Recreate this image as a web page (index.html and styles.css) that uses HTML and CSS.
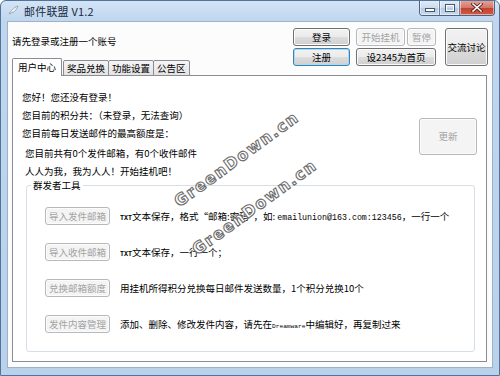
FILE: index.html
```html
<!DOCTYPE html>
<html lang="zh-CN">
<head>
    <meta charset="UTF-8">
    <meta name="viewport" content="width=device-width, initial-scale=1.0">
    <title>邮件联盟 V1.2</title>
    <link rel="stylesheet" href="styles.css">
</head>
<body>
    <div class="window">
        <div class="titlebar">
            <svg class="app-icon" width="11" height="10" viewBox="0 0 11 10">
                <path d="M1 9 C3 6 5 3 10 1 C9 4 7 7 3 8 Z" fill="#f4f6f8" stroke="#8a96a3" stroke-width="0.8"/>
            </svg>
            <span class="title">邮件联盟 V1.2</span>
            <div class="caption">
                <span class="cap cap-min"><i></i></span>
                <span class="cap cap-max"><i></i></span>
                <span class="cap cap-close">
                    <svg width="12" height="9" viewBox="0 0 12 9">
                        <path d="M2 1 L10 8 M10 1 L2 8" stroke="#5a2320" stroke-width="3.2" stroke-linecap="square"/>
                        <path d="M2 1 L10 8 M10 1 L2 8" stroke="#fff" stroke-width="1.6" stroke-linecap="square"/>
                    </svg>
                </span>
            </div>
        </div>
        <div class="client">
            <div class="header">
                <div class="header-left">
                    <div class="prompt">请先登录或注册一个账号</div>
                    <div class="tabs">
                        <div class="tab active">用户中心</div>
                        <div class="tab">奖品兑换</div>
                        <div class="tab">功能设置</div>
                        <div class="tab">公告区</div>
                    </div>
                </div>
                <div class="actions">
                    <div class="col col-login">
                        <button class="btn">登录</button>
                        <button class="btn focused">注册</button>
                    </div>
                    <div class="col col-hook">
                        <div class="row">
                            <button class="btn btn-start" disabled>开始挂机</button>
                            <button class="btn btn-pause" disabled>暂停</button>
                        </div>
                        <button class="btn">设2345为首页</button>
                    </div>
                    <button class="btn btn-talk">交流讨论</button>
                </div>
            </div>
            <div class="panel">
                <div class="info">
                    <div class="lines">
                        <div>您好！您还没有登录！</div>
                        <div>您目前的积分共：（未登录，无法查询）</div>
                        <div>您目前每日发送邮件的最高额度是：</div>
                        <div class="indent gap">您目前共有0个发件邮箱，有0个收件邮件</div>
                        <div class="indent">人人为我，我为人人！开始挂机吧！</div>
                    </div>
                    <button class="btn btn-refresh" disabled>更新</button>
                </div>
                <div class="group">
                    <span class="group-title">群发者工具</span>
                    <div class="tool-row">
                        <button class="btn btn-tool" disabled>导入发件邮箱</button>
                        <span><span class="mono-sm">TXT</span>文本保存，格式“邮箱:密码”，如: <span class="mono">emailunion@163.com:123456</span>，一行一个</span>
                    </div>
                    <div class="tool-row">
                        <button class="btn btn-tool" disabled>导入收件邮箱</button>
                        <span><span class="mono-sm">TXT</span>文本保存，一行一个；</span>
                    </div>
                    <div class="tool-row">
                        <button class="btn btn-tool" disabled>兑换邮箱额度</button>
                        <span>用挂机所得积分兑换每日邮件发送数量，1个积分兑换10个</span>
                    </div>
                    <div class="tool-row">
                        <button class="btn btn-tool" disabled>发件内容管理</button>
                        <span>添加、删除、修改发件内容，请先在<span class="mono-xs">Dreamware</span>中编辑好，再复制过来</span>
                    </div>
                </div>
            </div>
        </div>
        <span class="watermark wm1">GreenDown.cn</span>
        <span class="watermark wm2">GreenDown.cn</span>
    </div>
</body>
</html>
```

FILE: styles.css
```css
body {
    margin: 0;
    background: #fff;
    font-family: "Noto Sans CJK SC", "Liberation Sans", sans-serif;
    font-size: 9.5px;
    color: #000;
}
.window {
    position: relative;
    width: 500px;
    height: 376px;
    box-sizing: border-box;
    border: 1px solid #52739a;
    border-radius: 6px 6px 0 0;
    padding: 0 6px 7px;
    background: linear-gradient(to bottom, #d3e4f6 0, #bfd6ee 20px, #b9d1ea 100%);
    display: flex;
    flex-direction: column;
    overflow: hidden;
}
.titlebar {
    height: 20px;
    display: flex;
    align-items: center;
}
.app-icon {
    margin-left: 1px;
    margin-top: -2px;
}
.title {
    margin-left: 5px;
    font-size: 11px;
    color: #1b2b42;
    letter-spacing: 0.2px;
}
.caption {
    margin-left: auto;
    margin-right: -2px;
    align-self: flex-start;
    margin-top: -1px;
    display: flex;
    height: 15px;
    border: 1px solid #4d6380;
    border-top: none;
    border-radius: 0 0 4px 4px;
    overflow: hidden;
}
.cap {
    display: flex;
    align-items: center;
    justify-content: center;
    height: 100%;
    box-shadow: inset 0 0 0 1px rgba(255, 255, 255, 0.5);
}
.cap-min, .cap-max {
    width: 19px;
    background: linear-gradient(to bottom, #e4edf7 0, #cbdcee 50%, #b4cae2 51%, #c7daee 100%);
    border-right: 1px solid #6a83a3;
}
.cap-min i {
    display: block;
    width: 8px;
    height: 2px;
    margin-top: 5px;
    background: #fff;
    border: 1px solid #45576e;
}
.cap-max i {
    display: block;
    width: 6px;
    height: 4px;
    border: 1px solid #fff;
    outline: 1px solid #45576e;
}
.cap-close {
    width: 34px;
    background: linear-gradient(to bottom, #e6a89d 0, #d4776b 50%, #c0402f 51%, #d35a45 100%);
}
.client {
    flex: 1;
    display: flex;
    flex-direction: column;
    background: #fcfcfc;
    border: 1px solid #9cb2c9;
}
.header {
    height: 53px;
    display: flex;
}
.header-left {
    flex: 1;
    padding-left: 4px;
    display: flex;
    flex-direction: column;
}
.prompt {
    padding-top: 13px;
    line-height: 12px;
}
.tabs {
    margin-top: auto;
    margin-bottom: -1px;
    display: flex;
    align-items: flex-end;
    position: relative;
    z-index: 1;
}
.tab {
    height: 16px;
    box-sizing: border-box;
    padding: 0 3px;
    line-height: 14px;
    border: 1px solid #898c95;
    border-radius: 2px 2px 0 0;
    background: linear-gradient(to bottom, #f5f5f5, #e3e3e3);
}
.tab + .tab {
    margin-left: -1px;
}
.tab.active {
    height: 18px;
    padding: 0 5px;
    line-height: 17px;
    background: #fff;
    border-bottom: none;
    margin-right: 1px;
}
.tab.active + .tab {
    margin-left: 0;
}
.actions {
    display: flex;
    align-items: flex-start;
    padding-top: 6px;
    margin-right: 4px;
}
.col {
    display: flex;
    flex-direction: column;
    gap: 2px;
}
.col-login {
    width: 57px;
}
.col-hook {
    width: 80px;
    margin-left: 6px;
}
.row {
    display: flex;
    gap: 2px;
}
.btn {
    font: inherit;
    color: #000;
    height: 18px;
    padding: 0;
    box-sizing: border-box;
    line-height: 15px;
    border: 1px solid #707070;
    border-radius: 3px;
    background: linear-gradient(to bottom, #f2f2f2 0, #ebebeb 50%, #dddddd 51%, #cfcfcf 100%);
    box-shadow: inset 0 0 0 1px #fbfbfb;
}
.btn.focused {
    border-color: #3c7fb1;
    box-shadow: inset 0 0 0 1px #a8dcf5;
}
.btn:disabled {
    color: #a3a3a3;
    border-color: #b5b9bc;
    background: #f4f4f4;
    box-shadow: inset 0 0 0 1px #fcfcfc;
}
.btn-start {
    width: 49px;
}
.btn-pause {
    width: 29px;
}
.btn-talk {
    width: 43px;
    height: 38px;
    margin-left: 9px;
}
.panel {
    flex: 1;
    margin: 0 5px 5px 4px;
    padding: 12px 9px 0;
    background: #fff;
    border: 1px solid #898c95;
    display: flex;
    flex-direction: column;
}
.info {
    display: flex;
    align-items: flex-start;
}
.lines {
    flex: 1;
    line-height: 18px;
}
.indent {
    padding-left: 3px;
}
.gap {
    margin-top: 2px;
}
.btn-refresh {
    width: 58px;
    height: 37px;
    margin-top: 30px;
}
.group {
    position: relative;
    margin: 5px 2px 0 4px;
    padding: 12px 0 9px 18px;
    border: 1px solid #d5dfe5;
    border-radius: 3px;
}
.group-title {
    position: absolute;
    top: -7px;
    left: 4px;
    padding: 0 2px;
    line-height: 12px;
    background: #fff;
}
.tool-row {
    height: 36px;
    display: flex;
    align-items: center;
    gap: 10px;
}
.btn-tool {
    width: 65px;
    color: #8f8f8f;
}
.mono {
    font-family: "Liberation Mono", monospace;
    font-size: 8.3px;
}
.mono-sm {
    font-family: "Liberation Mono", monospace;
    font-size: 6.7px;
    font-weight: bold;
}
.mono-xs {
    font-family: "Liberation Mono", monospace;
    font-size: 6.2px;
}
.watermark {
    position: absolute;
    font-family: "DejaVu Sans", sans-serif;
    font-weight: bold;
    font-size: 16px;
    line-height: 16px;
    letter-spacing: 1.5px;
    color: #fff;
    -webkit-text-stroke: 1.1px #6d6d6d;
    transform: rotate(-36deg);
    transform-origin: 0 100%;
    pointer-events: none;
    white-space: nowrap;
}
.wm1 {
    left: 180px;
    top: 193px;
}
.wm2 {
    left: 198px;
    top: 241px;
}
```
